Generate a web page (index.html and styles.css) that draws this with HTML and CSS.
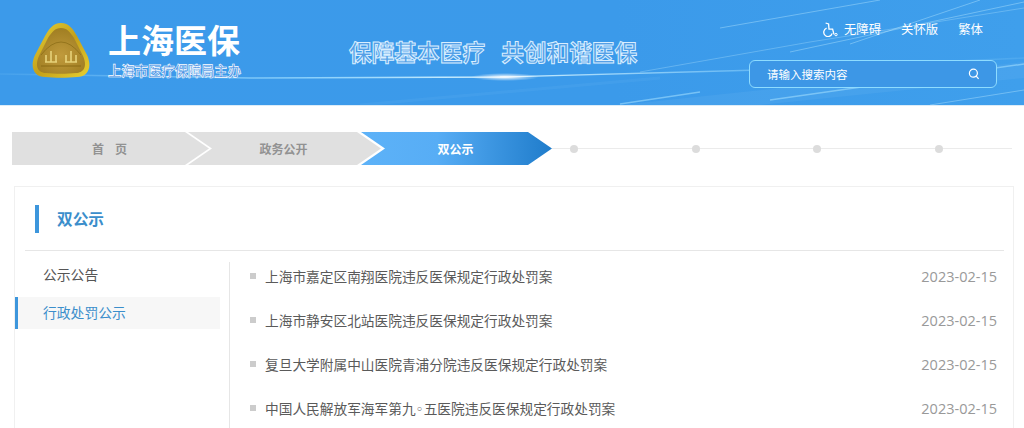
FILE: index.html
```html
<!DOCTYPE html>
<html lang="zh-CN">
<head>
    <meta charset="utf-8">
    <title>上海医保 - 双公示</title>
    <link rel="stylesheet" href="styles.css">
</head>
<body>
    <header class="header">
        <!-- background light streaks -->
        <svg class="header-bg" width="1024" height="105" viewBox="0 0 1024 105">
            <defs>
                <linearGradient id="lineGrad" x1="0" y1="0" x2="1" y2="0">
                    <stop offset="0" stop-color="#9bdcff" stop-opacity="0.1"/>
                    <stop offset="0.3" stop-color="#9bdcff" stop-opacity="0.8"/>
                    <stop offset="0.48" stop-color="#d8f4ff" stop-opacity="1"/>
                    <stop offset="0.75" stop-color="#9bdcff" stop-opacity="0.4"/>
                    <stop offset="1" stop-color="#9bdcff" stop-opacity="0.15"/>
                </linearGradient>
                <radialGradient id="glow">
                    <stop offset="0" stop-color="#ffffff" stop-opacity="0.95"/>
                    <stop offset="1" stop-color="#ffffff" stop-opacity="0"/>
                </radialGradient>
            </defs>
            <path d="M0 74 L250 78 L500 77 L760 70 L1024 58" stroke="url(#lineGrad)" stroke-width="1.3" fill="none"/>
            <ellipse cx="505" cy="77" rx="34" ry="4" fill="url(#glow)"/>
            <path d="M620 105 L1024 62 L1024 78 L760 105Z" fill="#fff" opacity="0.05"/>
            <path d="M620 104 L700 92 M770 100 L1024 64" stroke="#a8e2ff" stroke-width="1.5" opacity="0.55" fill="none"/>
            <path d="M790 52 L1024 2 M850 44 L980 0 M720 28 L880 0 M930 105 L1024 90" stroke="#bfeaff" stroke-width="1" opacity="0.4" fill="none"/>
            <path d="M640 72 L810 42 L1024 8" stroke="#bfeaff" stroke-width="1" opacity="0.3" fill="none"/>
            <path d="M360 105 L660 78" stroke="#bfeaff" stroke-width="3" opacity="0.06" fill="none"/>
        </svg>

        <div class="brand">
            <svg class="logo" width="60" height="58" viewBox="0 0 60 58">
                <defs>
                    <linearGradient id="goldRim" x1="0" y1="0" x2="1" y2="1">
                        <stop offset="0" stop-color="#e6d238"/>
                        <stop offset="0.5" stop-color="#c4a01a"/>
                        <stop offset="1" stop-color="#e8d030"/>
                    </linearGradient>
                    <radialGradient id="goldFace" cx="0.5" cy="0.6" r="0.6">
                        <stop offset="0" stop-color="#c09a3c"/>
                        <stop offset="1" stop-color="#a07e22"/>
                    </radialGradient>
                </defs>
                <path d="M30 1 C38 1 42 7 46 14 L56 33 C62 46 56 55 46 55 C36 56 24 56 14 55 C4 55 -2 46 4 33 L14 14 C18 7 22 1 30 1Z" fill="url(#goldRim)"/>
                <path d="M30 6 C36 6 39 10 43 16 L52 34 C57 45 52 51 45 51 C36 52 24 52 15 51 C8 51 3 45 8 34 L17 16 C21 10 24 6 30 6Z" fill="url(#goldFace)"/>
                <path d="M10 33 Q30 7 50 33" stroke="#8d6e18" stroke-width="0.8" fill="none"/>
                <path d="M15 40 V33 M20 40 V29 M25 40 V33 M35 40 V33 M40 40 V29 M45 40 V33 M14 40 H26 M34 40 H46" stroke="#e6d27a" stroke-width="1.6" fill="none"/>
                <path d="M10 44 H50" stroke="#8a6a14" stroke-width="1" fill="none"/>
            </svg>
            <div class="brand-text">
                <div class="brand-name">上海医保</div>
                <div class="brand-sub">上海市医疗保障局主办</div>
            </div>
        </div>

        <div class="slogan">
            <span>保障基本医疗</span>
            <span>共创和谐医保</span>
        </div>

        <div class="header-right">
            <nav class="top-links">
                <a class="top-link">
                    <svg width="15" height="15" viewBox="0 0 15 15" fill="none" stroke="#fff" stroke-width="1.3">
                        <path d="M2.6 1 L5.6 2 L6 7.2 H9.6 L11 12.4"/>
                        <path d="M3.6 6.2 A4.3 4.3 0 1 0 9.2 11.4"/>
                        <circle cx="13" cy="12.6" r="1.2" stroke-width="1"/>
                    </svg>
                    无障碍
                </a>
                <a class="top-link">关怀版</a>
                <a class="top-link">繁体</a>
            </nav>
            <div class="search-box">
                <span class="search-text">请输入搜索内容</span>
                <svg width="12" height="12" viewBox="0 0 12 12" fill="none" stroke="#fff" stroke-width="1.2">
                    <circle cx="5.4" cy="5.2" r="4"/>
                    <path d="M8.2 8.2 L10.6 10.8"/>
                </svg>
            </div>
        </div>
    </header>

    <div class="crumbs">
        <a class="crumb crumb-first">首&nbsp;&nbsp;&nbsp;&nbsp;页</a>
        <a class="crumb crumb-second">政务公开</a>
        <a class="crumb crumb-current">双公示</a>
        <div class="crumb-line">
            <i></i><i></i><i></i><i></i>
        </div>
    </div>

    <main class="card">
        <h2 class="card-title"><span>双公示</span></h2>
        <div class="card-body">
            <ul class="side-nav">
                <li>公示公告</li>
                <li class="active">行政处罚公示</li>
            </ul>
            <ul class="notice-list">
                <li><a>上海市嘉定区南翔医院违反医保规定行政处罚案</a><span class="date">2023-02-15</span></li>
                <li><a>上海市静安区北站医院违反医保规定行政处罚案</a><span class="date">2023-02-15</span></li>
                <li><a>复旦大学附属中山医院青浦分院违反医保规定行政处罚案</a><span class="date">2023-02-15</span></li>
                <li><a>中国人民解放军海军第九<span class="ring">◦</span>五医院违反医保规定行政处罚案</a><span class="date">2023-02-15</span></li>
            </ul>
        </div>
    </main>
</body>
</html>
```

FILE: styles.css
```css
html, body {
    height: 428px;
    overflow: hidden;
}

body {
    margin: 0;
    background: #fff;
    color: #555;
    font-family: "Noto Sans CJK SC", "Liberation Sans", sans-serif;
}

ul {
    list-style: none;
    margin: 0;
    padding: 0;
}

.header {
    position: relative;
    height: 105px;
    display: flex;
    background: linear-gradient(90deg, #3c9aea 0%, #3b9aea 60%, #3f9fec 100%);
    overflow: hidden;
    border-bottom: 1px solid #dcecf8;
}

.header-bg {
    position: absolute;
    left: 0;
    top: 0;
}

.brand {
    position: relative;
    display: flex;
    gap: 17px;
    padding: 22px 0 0 31px;
    width: 210px;
}

.logo {
    flex: none;
}

.brand-text {
    margin-top: -2px;
}

.brand-name {
    font-size: 33px;
    line-height: 38px;
    font-weight: 700;
    color: #fff;
    white-space: nowrap;
}

.brand-sub {
    margin-top: 5px;
    height: 16px;
    font-size: 13.3px;
    line-height: 16px;
    font-weight: 700;
    white-space: nowrap;
    color: #4a8fe2;
    -webkit-text-stroke: 0.6px #fff;
}

.slogan {
    position: relative;
    display: flex;
    gap: 16px;
    margin: 38px 0 0 108px;
    height: 28px;
    font-size: 22.7px;
    line-height: 28px;
    font-weight: 700;
    white-space: nowrap;
    color: #559fe6;
    -webkit-text-stroke: 1px #d8eeff;
}

.header-right {
    position: absolute;
    right: 27px;
    top: 0;
    width: 248px;
}

.top-links {
    display: flex;
    justify-content: flex-end;
    gap: 20px;
    padding: 20px 14px 0 0;
}

.top-link {
    display: flex;
    align-items: center;
    gap: 6px;
    height: 18px;
    font-size: 12.4px;
    color: #fff;
    white-space: nowrap;
}

.search-box {
    display: flex;
    align-items: center;
    justify-content: space-between;
    height: 26px;
    margin-top: 22px;
    padding: 0 16px 0 17px;
    border: 1px solid #8edcff;
    border-radius: 6px;
    background: #3d97e6;
}

.search-text {
    font-size: 11.5px;
    color: #fff;
}

.crumbs {
    display: flex;
    align-items: center;
    height: 33px;
    margin: 26px 12px 0;
}

.crumb {
    display: flex;
    align-items: center;
    justify-content: center;
    height: 33px;
    padding-right: 2px;
    box-sizing: border-box;
    font-size: 12px;
    font-weight: 700;
    color: #929292;
    background: #e0e0e0;
    white-space: nowrap;
}

.crumb-first {
    width: 197px;
    clip-path: polygon(0 0, 173px 0, 100% 50%, 173px 100%, 0 100%);
}

.crumb-second {
    width: 193px;
    margin-left: -21px;
    clip-path: polygon(0 0, 169px 0, 100% 50%, 169px 100%, 0 100%, 24px 50%);
}

.crumb-current {
    width: 191px;
    margin-left: -20px;
    color: #fff;
    background: linear-gradient(90deg, #5db2f8 0%, #57adf5 40%, #1f7ccb 100%);
    clip-path: polygon(0 0, 167px 0, 100% 50%, 167px 100%, 0 100%, 24px 50%);
}

.crumb-line {
    flex: 1;
    display: flex;
    align-items: center;
    gap: 113.6px;
    height: 1px;
    padding-left: 18px;
    background: #ebebeb;
}

.crumb-line i {
    flex: none;
    width: 8px;
    height: 8px;
    border-radius: 50%;
    background: #dcdcdc;
}

.card {
    margin: 21px 10px 0 14px;
    height: 242px;
    border: 1px solid #f0f0f0;
    border-bottom: 0;
    box-sizing: border-box;
    overflow: hidden;
}

.card-title {
    display: flex;
    align-items: center;
    height: 63px;
    margin: 0 9px 0 10px;
    padding: 0 0 0 10px;
    border-bottom: 1px solid #e6e6e6;
    font-size: 15.7px;
    font-weight: 700;
    color: #3b8ecb;
}

.card-title span {
    display: block;
    padding: 0 0 1px 18px;
    border-left: 4px solid #3d96dc;
    line-height: 27px;
}

.card-body {
    display: flex;
    height: 178px;
    padding-top: 11px;
    box-sizing: border-box;
}

.side-nav {
    width: 205px;
    margin: -3px 9px 0 0;
    flex: none;
}

.side-nav li {
    height: 32px;
    line-height: 30px;
    margin-bottom: 6px;
    padding-left: 28px;
    font-size: 13.8px;
    color: #555;
}

.side-nav .active {
    padding-left: 25px;
    border-left: 3px solid #3d96dc;
    background: #f7f7f7;
    color: #3b8ecb;
}

.notice-list {
    flex: 1;
    padding: 0 16px 0 20px;
    border-left: 1px solid #e6e6e6;
}

.notice-list li {
    display: flex;
    justify-content: space-between;
    height: 44px;
    padding: 4px 0 0 15px;
    box-sizing: border-box;
    position: relative;
    font-size: 13.7px;
    line-height: 20px;
    color: #5a5a5a;
    white-space: nowrap;
}

.notice-list li::before {
    content: "";
    position: absolute;
    left: 0;
    top: 11px;
    width: 6px;
    height: 6px;
    background: #ccc;
}

.ring {
    font-family: "DejaVu Sans", sans-serif;
}

.date {
    margin-top: 1px;
    font-family: "Open Sans", "Liberation Sans", sans-serif;
    font-size: 14.5px;
    color: #999;
}
```
